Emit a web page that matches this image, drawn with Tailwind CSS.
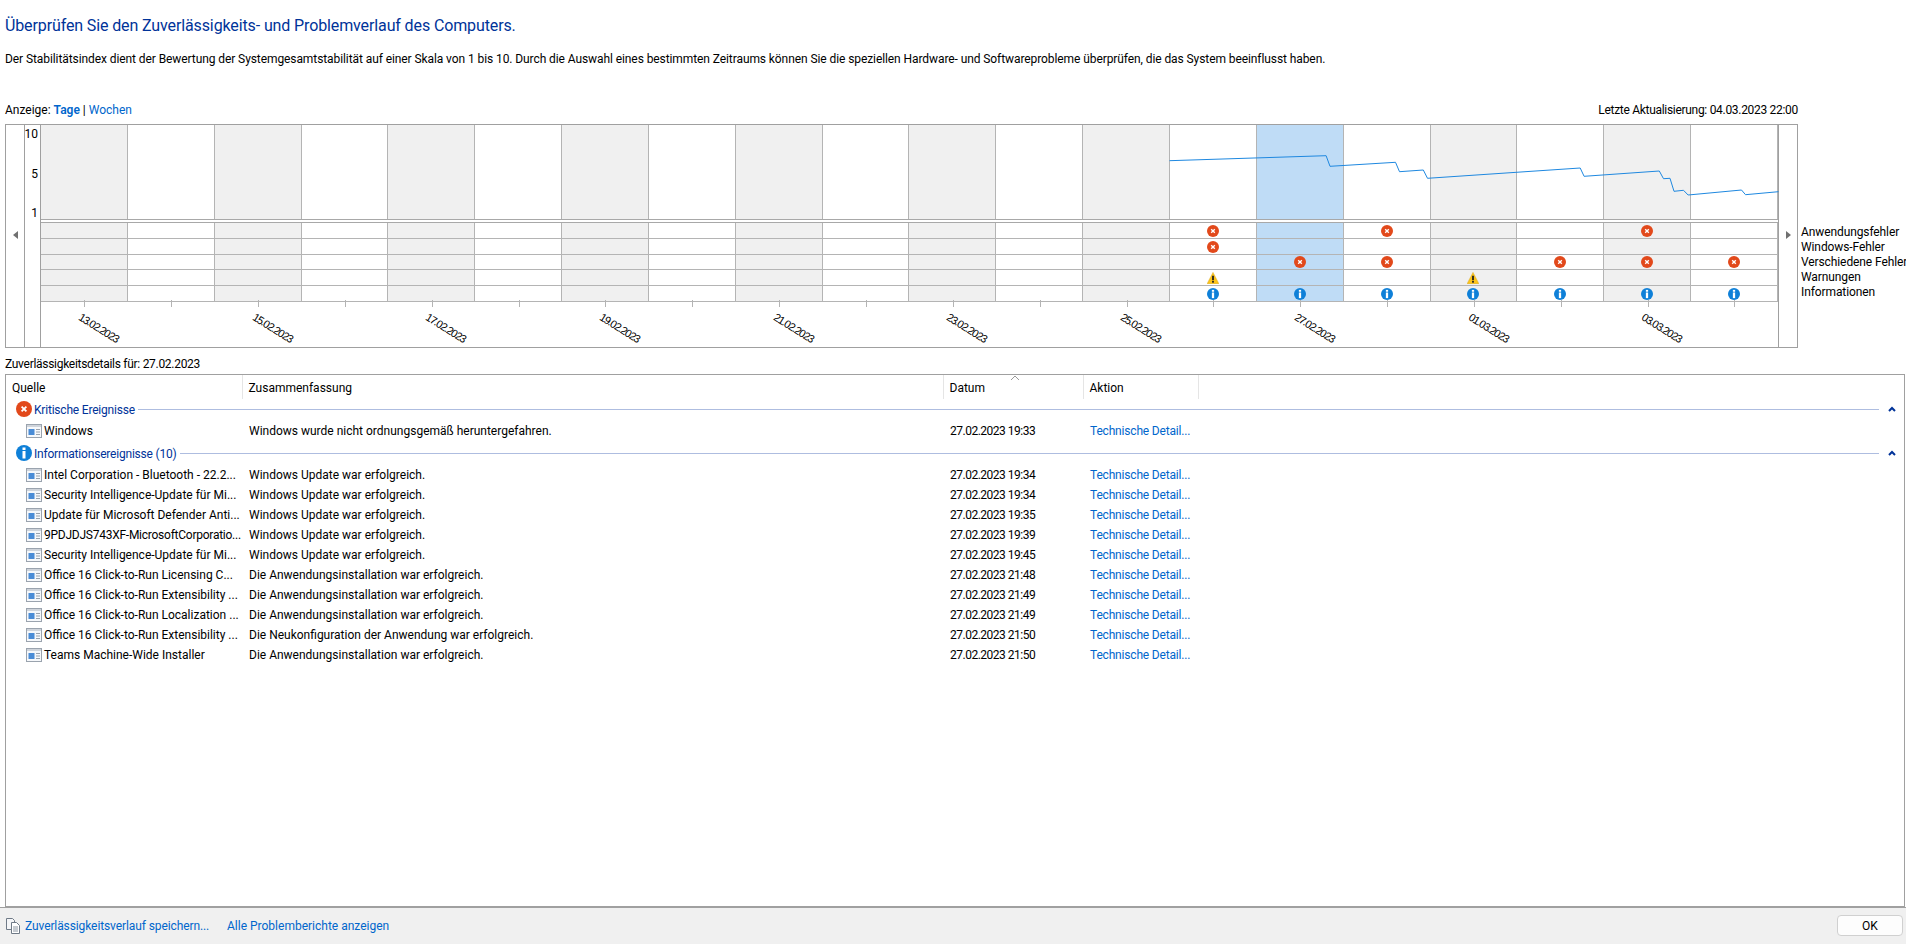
<!DOCTYPE html>
<html lang="de">
<head>
<meta charset="UTF-8">
<title>Zuverlässigkeitsverlauf</title>
<script src="https://cdn.jsdelivr.net/npm/@tailwindcss/browser@4"></script>
</head>
<body class="w-[1906px] h-[944px] overflow-hidden bg-white text-black font-['Roboto','Noto_Sans',sans-serif] text-[12px] leading-4">

<svg class="hidden">
  <symbol id="err" viewBox="0 0 16 16"><circle cx="8" cy="8" r="8" fill="#e2491b"/><path d="M5.600 5.600l4.800 4.800M10.400 5.600l-4.800 4.800" stroke="#fff" stroke-width="1.800"/></symbol>
  <symbol id="info" viewBox="0 0 16 16"><circle cx="8" cy="8" r="8" fill="#0f80d8"/><rect x="6.500" y="2.500" width="3" height="2.500" fill="#fff"/><rect x="6.500" y="6" width="3" height="7.500" fill="#fff"/></symbol>
  <symbol id="warn" viewBox="0 0 16 16"><path d="M8 .5L15.800 15.500H.2z" fill="#fcc419" stroke="#d8a108" stroke-width=".6"/><rect x="6.800" y="5" width="2.400" height="6" fill="#222"/><rect x="6.800" y="12" width="2.400" height="2.200" fill="#222"/></symbol>
  <symbol id="evt" viewBox="0 0 16 14"><rect x=".5" y=".5" width="15" height="13" fill="#f6f8fb" stroke="#9aa3ae"/><rect x="1" y="1" width="14" height="2" fill="#cfd4db"/><rect x="2.500" y="5" width="6" height="6" fill="#4a8cd6"/><path d="M10 5.500h4M10 8h4M10 10.500h4" stroke="#9aa3ae"/></symbol>
</svg>

<div class="flex flex-col h-full">
  <div class="h-[907px] flex flex-col pl-[5px] pr-[1.500px]">
    <h1 class="h-[51px] pt-[16px] text-[#003399] text-[16px] leading-5 tracking-[-0.12px]">Überprüfen Sie den Zuverlässigkeits- und Problemverlauf des Computers.</h1>
    <p class="h-[49px] tracking-[-0.085px]">Der Stabilitätsindex dient der Bewertung der Systemgesamtstabilität auf einer Skala von 1 bis 10. Durch die Auswahl eines bestimmten Zeitraums können Sie die speziellen Hardware- und Softwareprobleme überprüfen, die das System beeinflusst haben.</p>

    <div class="h-[24px] w-[1793px] flex justify-between pt-[2px]">
      <div>Anzeige: <a class="font-semibold text-[#0066cc]">Tage</a> | <a class="text-[#0066cc]">Wochen</a></div>
      <div class="tracking-[-0.3px]">Letzte Aktualisierung: 04.03.2023 22:00</div>
    </div>

    <div class="flex h-[224px]">
      <div class="flex h-full w-[1793px] shrink-0 border border-[#a0a0a0]">
        <div class="w-[19px] shrink-0 border-r border-[#a0a0a0] flex items-center justify-center pb-[3px]">
          <div class="w-0 h-0 border-y-[4px] border-y-transparent border-r-[5px] border-r-[#707070]"></div>
        </div>
        <div class="w-[16px] shrink-0 flex flex-col items-end pr-[2px] pt-[1px] border-r border-[#a0a0a0]">
          <div class="h-[40px]">10</div><div class="h-[39px]">5</div><div>1</div>
        </div>
        <div id="plot" class="relative w-[1738px] shrink-0"></div>
        <div class="flex-1 flex items-center justify-center pb-[3px]">
          <div class="w-0 h-0 border-y-[4px] border-y-transparent border-l-[5px] border-l-[#707070]"></div>
        </div>
      </div>
      <div class="ml-[3px] pt-[101px] leading-[15px] whitespace-nowrap tracking-[-0.1px]">
        <div>Anwendungsfehler</div>
        <div>Windows-Fehler</div>
        <div>Verschiedene Fehler</div>
        <div>Warnungen</div>
        <div>Informationen</div>
      </div>
    </div>

    <div class="h-[26px] pt-[8px] tracking-[-0.29px]">Zuverlässigkeitsdetails für: 27.02.2023</div>

    <div class="flex-1 border border-[#a0a0a0] relative">
      <div class="flex h-[24px] items-center">
        <div class="w-[236.500px] h-full flex items-center pl-[6px] pt-[2px] border-r border-[#e5e5e5]">Quelle</div>
        <div class="w-[701px] h-full flex items-center pl-[6px] pt-[2px] border-r border-[#e5e5e5]">Zusammenfassung</div>
        <div class="w-[140px] h-full flex items-center pl-[6px] pt-[2px] border-r border-[#e5e5e5]">Datum</div>
        <div class="w-[115px] h-full flex items-center pl-[6px] pt-[2px] border-r border-[#e5e5e5]">Aktion</div>
      </div>
      <svg class="absolute left-[1004px] top-0" width="10" height="6" viewBox="0 0 10 6"><path d="M1 5l4-4 4 4" fill="none" stroke="#9a9a9a"/></svg>

      <div id="rows"></div>
    </div>
  </div>

  <div class="h-[37px] bg-[#f0f0f0] flex items-center pl-[6px] pr-[3px] border-t border-[#a0a0a0]">
    <svg width="14" height="16" viewBox="0 0 14 16" class="mr-[5px] shrink-0">
      <path d="M.5.500h6l2 2v9h-8z" fill="#f4f5f7" stroke="#6f7a87"/>
      <path d="M5.500 4.500h5l3 3v8h-8z" fill="#fff" stroke="#6f7a87"/>
      <path d="M7 9h5M7 11h5M7 13h5" stroke="#8d97a3"/>
    </svg>
    <a class="text-[#0066cc] w-[202px] shrink-0 tracking-[-0.1px]">Zuverlässigkeitsverlauf speichern...</a>
    <a class="text-[#0066cc]">Alle Problemberichte anzeigen</a>
    <button class="ml-auto w-[66px] h-[21px] bg-[#fdfdfd] border border-[#d0d0d0] rounded-[4px] mb-[1px]">OK</button>
  </div>
</div>

<script>
  const ICON = { e: 'err', i: 'info', w: 'warn' };
  // events per column index, top to bottom: Anwendung, Windows, Verschiedene, Warnung, Info
  const EVENTS = {
    13: ['e', 'e', '', 'w', 'i'],
    14: ['', '', 'e', '', 'i'],
    15: ['e', '', 'e', '', 'i'],
    16: ['', '', '', 'w', 'i'],
    17: ['', '', 'e', '', 'i'],
    18: ['e', '', 'e', '', 'i'],
    19: ['', '', 'e', '', 'i'],
  };
  const DATES = { 0: '13.02.2023', 2: '15.02.2023', 4: '17.02.2023', 6: '19.02.2023', 8: '21.02.2023', 10: '23.02.2023', 12: '25.02.2023', 14: '27.02.2023', 16: '01.03.2023', 18: '03.03.2023' };
  const LINE = [[1169,160.7],[1325.6,155.7],[1329.5,166.3],[1395,162.3],[1399,171.7],[1422.8,170],[1427,178.3],[1579.7,168],[1583.6,176.3],[1658.8,171],[1663,178.7],[1669.5,178.3],[1673.5,191.3],[1683,190.3],[1687.6,195],[1741,190],[1745,194.7],[1778,191.7]];

  let cols = '';
  for (let c = 0; c < 20; c++) {
    const gray = c % 2 == 0 && (c < 13 || c > 14);
    const fill = c == 14 ? 'bg-[#bfdcf6]' : gray ? 'bg-[#f0f0f0]' : 'bg-white';
    const ev = EVENTS[c] || ['', '', '', '', ''];
    let cells = '';
    ev.forEach((k) => {
      cells += `<div class="h-[15.800px] border-b border-[#b4b4b4] flex items-center justify-center">${k ? `<svg width="12" height="12" class="mt-[1px]"><use href="#${ICON[k]}"/></svg>` : ''}</div>`;
    });
    const label = DATES[c] ? `<div class="absolute left-[43px] top-[184px] origin-top-left rotate-[32deg] whitespace-nowrap text-[11px] tracking-[-1px] font-['Liberation_Sans',sans-serif]">${DATES[c]}</div>` : '';
    cols += `<div class="relative flex-1">
      <div class="h-[94px] border-r border-[#b4b4b4] ${fill}"></div>
      <div class="h-[4px] border-y border-[#a8a8a8] bg-white"></div>
      <div class="border-r border-[#b4b4b4] ${fill}">${cells}</div>
      <div class="absolute left-1/2 top-[175px] h-[7px] w-px bg-[#b4b4b4]"></div>
      ${label}
    </div>`;
  }
  const pts = LINE.map((p) => `${p[0] - 40.5},${p[1] - 125}`).join(' ');
  document.getElementById('plot').innerHTML = `<div class="flex h-full border-r border-[#a0a0a0]">${cols}</div>
    <svg class="absolute left-0 top-0" width="1738" height="94"><polyline points="${pts}" fill="none" stroke="#1e88e0" stroke-width="1"/></svg>`;

  const LINK = 'Technische Detail...';
  const WU = 'Windows Update war erfolgreich.';
  const AI = 'Die Anwendungsinstallation war erfolgreich.';
  const ROWS = [
    ['Intel Corporation - Bluetooth - 22.2...', WU, '19:34'],
    ['Security Intelligence-Update für Mi...', WU, '19:34'],
    ['Update für Microsoft Defender Anti...', WU, '19:35'],
    ['<span class="tracking-[-0.25px]">9PDJDJS743XF-MicrosoftCorporatio...</span>', WU, '19:39'],
    ['Security Intelligence-Update für Mi...', WU, '19:45'],
    ['Office 16 Click-to-Run Licensing C...', AI, '21:48'],
    ['Office 16 Click-to-Run Extensibility ...', AI, '21:49'],
    ['Office 16 Click-to-Run Localization ...', AI, '21:49'],
    ['Office 16 Click-to-Run Extensibility ...', 'Die Neukonfiguration der Anwendung war erfolgreich.', '21:50'],
    ['Teams Machine-Wide Installer', AI, '21:50'],
  ];
  const group = (icon, title, gap) => `<div class="flex items-center h-[20px] mb-[1px] ${gap} pl-[10px] pr-[6px]">
      <svg width="16" height="16" class="mr-[2px] shrink-0"><use href="#${icon}"/></svg>
      <span class="text-[#003399] whitespace-nowrap tracking-[-0.2px] pt-[1px]">${title}</span>
      <div class="flex-1 h-px bg-[#aebde0] ml-[3px]"></div>
      <svg width="8" height="6" viewBox="0 0 8 6" class="ml-[9px] mr-[2px]"><path d="M1 5l3-3 3 3" fill="none" stroke="#003399" stroke-width="2"/></svg>
    </div>`;
  const row = (r) => `<div class="flex items-center h-[20px] pt-[1px]">
      <div class="w-[237px] pl-[20px] flex items-center whitespace-nowrap"><svg width="16" height="14" class="mr-[2px] shrink-0"><use href="#evt"/></svg>${r[0]}</div>
      <div class="w-[701px] pl-[6px]">${r[1]}</div>
      <div class="w-[140px] pl-[6px] tracking-[-0.5px]">27.02.2023 ${r[2]}</div>
      <div class="pl-[6px] text-[#0066cc] tracking-[-0.18px]">${LINK}</div>
    </div>`;
  document.getElementById('rows').innerHTML =
    group('err', 'Kritische Ereignisse', '') +
    row(['Windows', 'Windows wurde nicht ordnungsgemäß heruntergefahren.', '19:33']) +
    group('info', 'Informationsereignisse (10)', 'mt-[3px]') +
    ROWS.map(row).join('');
</script>
</body>
</html>
